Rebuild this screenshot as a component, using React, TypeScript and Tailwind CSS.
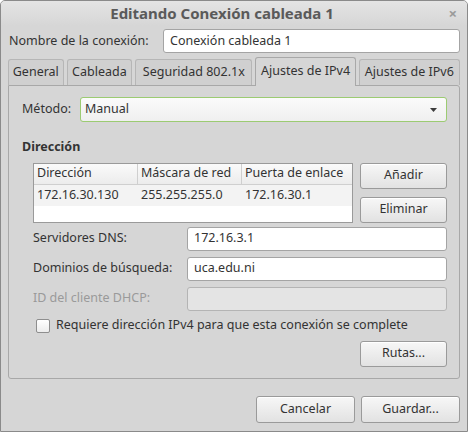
import React from 'react'

const font = { fontFamily: '"Noto Sans", "Open Sans", "DejaVu Sans", sans-serif' }

function Button({ children, className = '' }: { children: React.ReactNode; className?: string }) {
  return (
    <button
      className={`flex items-center justify-center rounded-[3px] border border-[#9a9a9a] bg-gradient-to-b from-[#f7f7f7] to-[#e2e2e2] text-[#333333] shadow-[inset_0_1px_0_#ffffff] ${className}`}
    >
      {children}
    </button>
  )
}

function Field({ label, value, disabled }: { label: string; value?: string; disabled?: boolean }) {
  return (
    <div className="flex h-[24px] items-center">
      <span className={`w-[166px] pl-[12px] ${disabled ? 'text-[#9a9a9a]' : ''}`}>{label}</span>
      <div
        className={`flex h-full w-[260px] items-center rounded-[3px] border px-[6px] ${
          disabled ? 'border-[#b4b4b4] bg-[#e4e4e4]' : 'border-[#a4a4a4] bg-white'
        }`}
      >
        {value}
      </div>
    </div>
  )
}

const tabs = [
  { label: 'General', w: 'w-[56px]' },
  { label: 'Cableada', w: 'w-[66px]' },
  { label: 'Seguridad 802.1x', w: 'w-[118px]' },
  { label: 'Ajustes de IPv4', w: 'w-[101px]', active: true },
  { label: 'Ajustes de IPv6', w: 'w-[102px]' },
]

export default function App() {
  return (
    <div
      style={font}
      className="flex h-[432px] w-[468px] flex-col overflow-hidden whitespace-nowrap rounded-t-[5px] border border-[#8a8a8a] bg-[#d6d6d6] text-[12.5px] leading-none text-[#333333]"
    >
      {/* title bar */}
      <div className="relative flex h-[25px] shrink-0 items-center justify-center bg-gradient-to-b from-[#e4e4e4] to-[#d6d6d6] pr-[24px]">
        <span className="text-[15px] font-bold text-[#5a5a5a]">Editando Conexión cableada 1</span>
        <span className="absolute right-[10px] top-[5px] text-[15px] font-bold text-[#9a9a9a]">×</span>
      </div>

      <div className="flex flex-1 flex-col px-[7px]">
        {/* connection name */}
        <div className="mt-[3px] flex h-[24px] items-center">
          <span className="w-[155px] pl-[1px]">Nombre de la conexión:</span>
          <div className="flex h-full flex-1 items-center rounded-[3px] border border-[#a4a4a4] bg-white px-[6px]">
            Conexión cableada 1
          </div>
        </div>

        {/* tabs */}
        <div className="mt-[4px] flex h-[28px] items-end gap-[3px]">
          {tabs.map((t) => (
            <div
              key={t.label}
              className={`flex ${t.w} items-center justify-center rounded-t-[3px] border border-b-0 ${
                t.active
                  ? 'relative z-10 mb-[-1px] h-[29px] border-[#a8a8a8] bg-[#d6d6d6] pb-[2px]'
                  : 'h-[26px] border-[#b6b6b6] bg-[#d0d0d0]'
              }`}
            >
              {t.label}
            </div>
          ))}
        </div>

        {/* panel */}
        <div className="flex h-[294px] flex-col rounded-[3px] rounded-tl-none border border-[#a8a8a8] bg-[#d6d6d6] px-[12px]">
          <div className="mt-[11px] flex h-[25px] items-center">
            <span className="w-[59px] pl-[1px]">Método:</span>
            <div className="flex h-full flex-1 items-center justify-between rounded-[3px] border border-[#9ccb72] bg-gradient-to-b from-[#fbfbfb] to-[#efefef] pl-[4px] pr-[9px]">
              <span>Manual</span>
              <svg width="7" height="4" viewBox="0 0 7 4">
                <path d="M0 0h7L3.5 4z" fill="#3c3c3c" />
              </svg>
            </div>
          </div>

          <div className="mt-[19px] pl-[1px] font-bold">Dirección</div>

          <div className="mt-[9px] flex gap-[7px] pl-[12px]">
            <div className="h-[60px] w-[321px] border border-[#9a9a9a] bg-white">
              <div className="flex h-[21px] border-b border-[#cfcfcf] bg-gradient-to-b from-[#fafafa] to-[#ececec]">
                <div className="flex w-[104px] items-center border-r border-[#cfcfcf] pl-[3px]">Dirección</div>
                <div className="flex w-[104px] items-center border-r border-[#cfcfcf] pl-[3px]">Máscara de red</div>
                <div className="flex flex-1 items-center pl-[3px]">Puerta de enlace</div>
              </div>
              <div className="flex h-[21px] bg-[#f3f3f3]">
                <div className="flex w-[104px] items-center pl-[3px]">172.16.30.130</div>
                <div className="flex w-[104px] items-center pl-[3px]">255.255.255.0</div>
                <div className="flex flex-1 items-center pl-[3px]">172.16.30.1</div>
              </div>
            </div>
            <div className="flex flex-col gap-[8px]">
              <Button className="h-[26px] w-[87px]">Añadir</Button>
              <Button className="h-[26px] w-[87px]">Eliminar</Button>
            </div>
          </div>

          <div className="mt-[4px] flex flex-col gap-[6px]">
            <Field label="Servidores DNS:" value="172.16.3.1" />
            <Field label="Dominios de búsqueda:" value="uca.edu.ni" />
            <Field label="ID del cliente DHCP:" disabled />
          </div>

          <div className="mt-[8px] flex h-[14px] items-center pl-[15px]">
            <div className="h-[14px] w-[14px] rounded-[2px] border border-[#8e8e8e] bg-gradient-to-b from-white to-[#ececec]" />
            <span className="ml-[6px]">Requiere dirección IPv4 para que esta conexión se complete</span>
          </div>

          <div className="mt-[8px] flex justify-end">
            <Button className="h-[26px] w-[87px]">Rutas...</Button>
          </div>
        </div>

        {/* footer */}
        <div className="mt-[17px] flex justify-end gap-[6px]">
          <Button className="h-[27px] w-[99px]">Cancelar</Button>
          <Button className="h-[27px] w-[99px]">Guardar...</Button>
        </div>
      </div>
    </div>
  )
}
